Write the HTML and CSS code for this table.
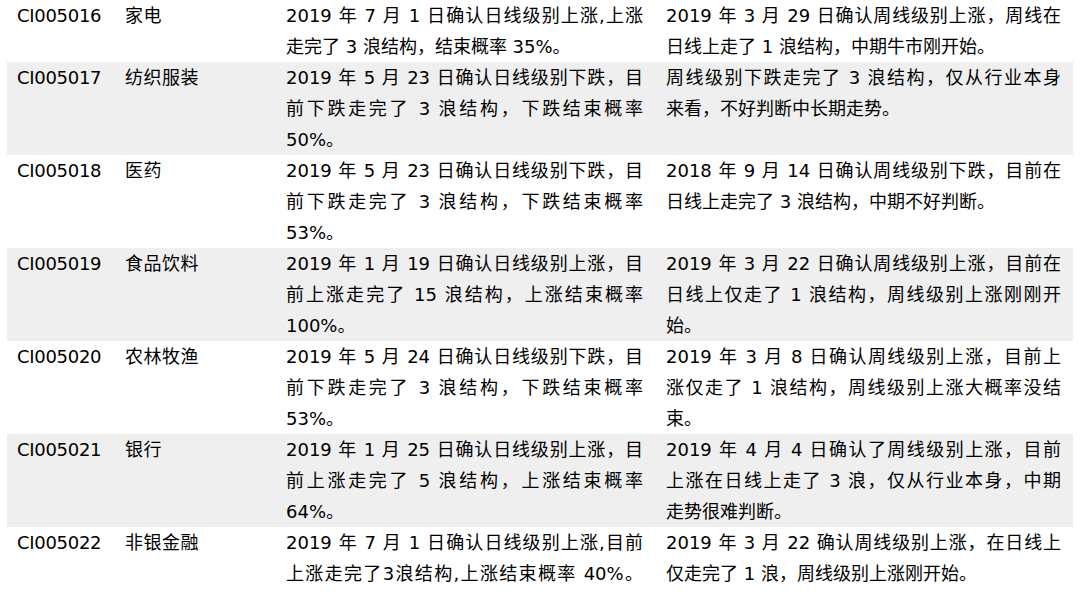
FILE: index.html
```html
<!DOCTYPE html>
<html lang="zh-CN">
<head>
<meta charset="utf-8">
<title>行业波浪结构</title>
<link rel="stylesheet" href="styles.css">
</head>
<body>
<div class="table">
  <div class="row">
    <div class="cell code">CI005016</div>
    <div class="cell name">家电</div>
    <div class="cell day"><div class="j">2019 年 7 月 1 日确认日线级别上涨,上涨</div><div>走完了 3 浪结构，结束概率 35%。</div></div>
    <div class="cell week"><div class="j">2019 年 3 月 29 日确认周线级别上涨，周线在</div><div>日线上走了 1 浪结构，中期牛市刚开始。</div></div>
  </div>
  <div class="row">
    <div class="cell code">CI005017</div>
    <div class="cell name">纺织服装</div>
    <div class="cell day"><div class="j">2019 年 5 月 23 日确认日线级别下跌，目</div><div class="j">前下跌走完了 3 浪结构，下跌结束概率</div><div>50%。</div></div>
    <div class="cell week"><div class="j">周线级别下跌走完了 3 浪结构，仅从行业本身</div><div>来看，不好判断中长期走势。</div></div>
  </div>
  <div class="row">
    <div class="cell code">CI005018</div>
    <div class="cell name">医药</div>
    <div class="cell day"><div class="j">2019 年 5 月 23 日确认日线级别下跌，目</div><div class="j">前下跌走完了 3 浪结构，下跌结束概率</div><div>53%。</div></div>
    <div class="cell week"><div class="j">2018 年 9 月 14 日确认周线级别下跌，目前在</div><div>日线上走完了 3 浪结构，中期不好判断。</div></div>
  </div>
  <div class="row">
    <div class="cell code">CI005019</div>
    <div class="cell name">食品饮料</div>
    <div class="cell day"><div class="j">2019 年 1 月 19 日确认日线级别上涨，目</div><div class="j">前上涨走完了 15 浪结构，上涨结束概率</div><div>100%。</div></div>
    <div class="cell week"><div class="j">2019 年 3 月 22 日确认周线级别上涨，目前在</div><div class="j">日线上仅走了 1 浪结构，周线级别上涨刚刚开</div><div>始。</div></div>
  </div>
  <div class="row">
    <div class="cell code">CI005020</div>
    <div class="cell name">农林牧渔</div>
    <div class="cell day"><div class="j">2019 年 5 月 24 日确认日线级别下跌，目</div><div class="j">前下跌走完了 3 浪结构，下跌结束概率</div><div>53%。</div></div>
    <div class="cell week"><div class="j">2019 年 3 月 8 日确认周线级别上涨，目前上</div><div class="j">涨仅走了 1 浪结构，周线级别上涨大概率没结</div><div>束。</div></div>
  </div>
  <div class="row">
    <div class="cell code">CI005021</div>
    <div class="cell name">银行</div>
    <div class="cell day"><div class="j">2019 年 1 月 25 日确认日线级别上涨，目</div><div class="j">前上涨走完了 5 浪结构，上涨结束概率</div><div>64%。</div></div>
    <div class="cell week"><div class="j">2019 年 4 月 4 日确认了周线级别上涨，目前</div><div class="j">上涨在日线上走了 3 浪，仅从行业本身，中期</div><div>走势很难判断。</div></div>
  </div>
  <div class="row">
    <div class="cell code">CI005022</div>
    <div class="cell name">非银金融</div>
    <div class="cell day"><div class="j">2019 年 7 月 1 日确认日线级别上涨,目前</div><div class="j">上涨走完了3浪结构,上涨结束概率 40%。</div></div>
    <div class="cell week"><div class="j">2019 年 3 月 22 确认周线级别上涨，在日线上</div><div>仅走完了 1 浪，周线级别上涨刚开始。</div></div>
  </div>
</div>
</body>
</html>
```
FILE: styles.css
```css
html, body {
  margin: 0;
  padding: 0;
  background: #ffffff;
}
body {
  font-family: "DejaVu Sans", "Noto Sans CJK SC", sans-serif;
  font-size: 18px;
  line-height: 31px;
  color: #000000;
}
.table {
  width: 1066px;
  margin-left: 7px;
}
.row {
  display: grid;
  grid-template-columns: 108px 161px 380px 417px;
}
.row:nth-child(even) {
  background: #efefef;
}
.cell {
  padding-left: 10px;
}
.code {
  letter-spacing: -0.3px;
}
.day {
  padding-right: 13px;
}
.week {
  padding-right: 12px;
}
.name {
  letter-spacing: 0.5px;
}
.j {
  text-align: justify;
  text-align-last: justify;
}
```
